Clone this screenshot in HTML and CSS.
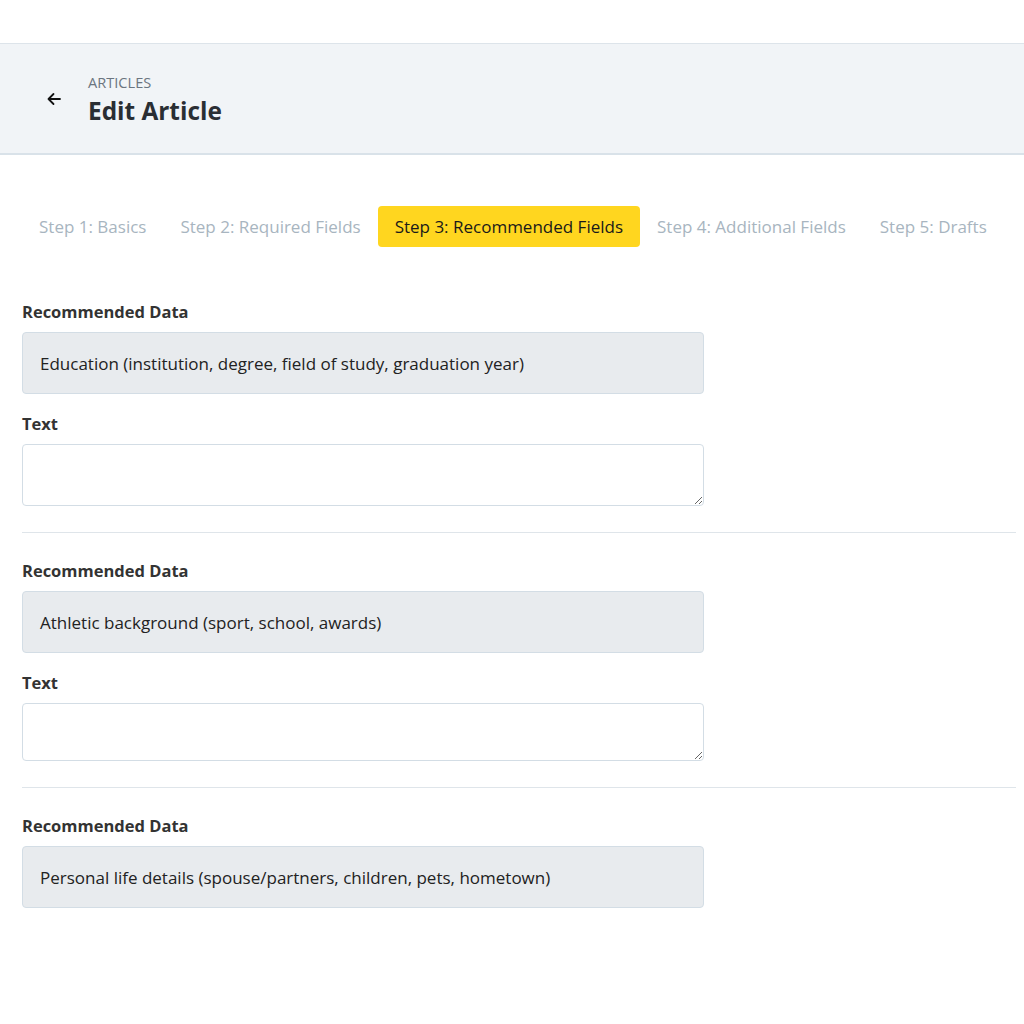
FILE: index.html
```html
<!DOCTYPE html>
<html>
<head>
<meta charset="utf-8">
<link rel="stylesheet" href="styles.css">
</head>
<body>
<div class="topbar"></div>
<header class="header">
  <button class="back" aria-label="Back">
    <svg width="16" height="16" viewBox="0 0 16 16"><path d="M14 8H2.5M7.5 3L2.5 8l5 5" fill="none" stroke="#111" stroke-width="1.8" stroke-linecap="round" stroke-linejoin="round"/></svg>
  </button>
  <div class="titles">
    <div class="crumb">ARTICLES</div>
    <h1 class="title">Edit Article</h1>
  </div>
</header>
<main class="content">
  <nav class="tabs">
    <span class="tab">Step 1: Basics</span>
    <span class="tab">Step 2: Required Fields</span>
    <span class="tab active">Step 3: Recommended Fields</span>
    <span class="tab">Step 4: Additional Fields</span>
    <span class="tab">Step 5: Drafts</span>
  </nav>
  <section class="group">
    <div class="label">Recommended Data</div>
    <div class="databox">Education (institution, degree, field of study, graduation year)</div>
    <div class="label">Text</div>
    <textarea class="field"></textarea>
  </section>
  <hr class="divider">
  <section class="group">
    <div class="label">Recommended Data</div>
    <div class="databox">Athletic background (sport, school, awards)</div>
    <div class="label">Text</div>
    <textarea class="field short"></textarea>
  </section>
  <hr class="divider">
  <section class="group">
    <div class="label">Recommended Data</div>
    <div class="databox">Personal life details (spouse/partners, children, pets, hometown)</div>
  </section>
</main>
</body>
</html>
```

FILE: styles.css
```css
* { box-sizing: border-box; }
html, body { margin: 0; padding: 0; background: #fff; }
body { font-family: "Open Sans", "Noto Sans", sans-serif; color: #222; }

.topbar { height: 44px; background: #fff; border-bottom: 1px solid #dde4ea; }

.header {
  height: 111px;
  background: #f1f4f7;
  border-bottom: 2px solid #d9e2e9;
  display: flex;
  align-items: center;
  padding-left: 46px;
}
.back {
  border: 0; background: transparent; padding: 0; margin: 0;
  width: 16px; height: 16px; display: flex; margin-right: 26px;
}
.titles { display: flex; flex-direction: column; margin-top: 2px; }
.crumb { font-size: 14.6px; line-height: 18px; color: #6b7580; }
.title { margin: 4px 0 0; font-size: 24.4px; line-height: 32px; font-weight: 700; color: #2a2e33; }

.content { padding: 51px 8px 40px 22px; }

.tabs { display: flex; align-items: center; margin-bottom: 53px; }
.tab {
  font-size: 17px; line-height: 41px; height: 41px;
  padding: 0 17px; color: #a8b5c0; border-radius: 4px; white-space: nowrap;
}
.tab.active { background: #ffd61f; color: #1a1a1a; }

.group { display: flex; flex-direction: column; width: 682px; }
.label { font-size: 16.5px; line-height: 24px; font-weight: 700; color: #333; margin-bottom: 8px; }
.databox {
  height: 62px; background: #e8ebee; border: 1px solid #d3dde5; border-radius: 4px;
  padding: 0 17px; display: flex; align-items: center; font-size: 17px; color: #222;
  margin-bottom: 18px;
}
.field {
  height: 62px; border: 1px solid #d3dde5; border-radius: 4px; resize: vertical;
  font-family: inherit; font-size: 16px; padding: 8px 12px; display: block; width: 100%;
}
.field.short { height: 58px; }
.divider { border: 0; border-top: 1px solid #dfe5ea; margin: 26px 0 26px; }
```
